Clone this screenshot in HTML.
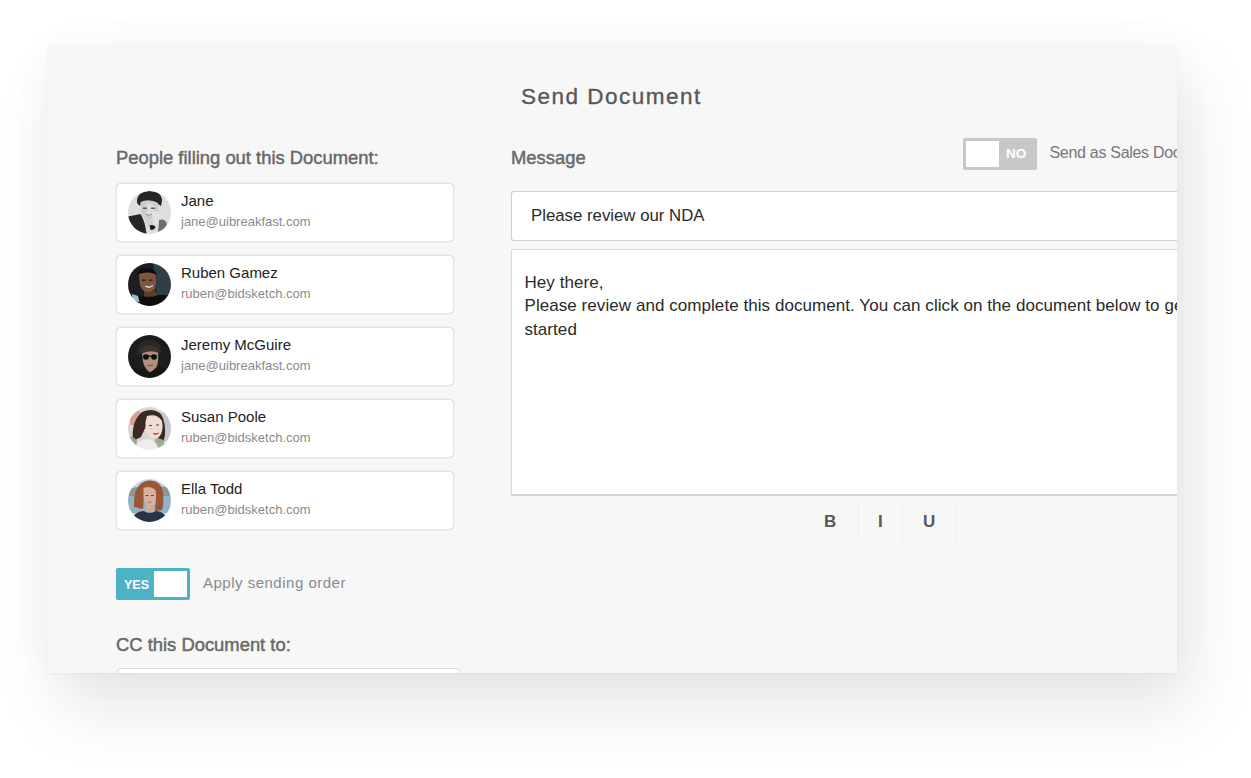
<!DOCTYPE html>
<html><head><meta charset="utf-8">
<style>
*{box-sizing:border-box;margin:0;padding:0}
html,body{width:1251px;height:778px;overflow:hidden;background:#fff;font-family:"Liberation Sans",sans-serif}
.shadow{position:absolute;left:47px;top:45px;width:1130px;height:628px;border-radius:4px;box-shadow:14px 35px 70px rgba(0,0,0,0.10),0 0 45px rgba(0,0,0,0.03),0 1px 3px rgba(0,0,0,0.04)}
.panel{position:absolute;left:47px;top:45px;width:1130px;height:628px;background:#f7f7f7;border-radius:4px;overflow:hidden}
.t{position:absolute;white-space:nowrap;line-height:1}
.title{left:474px;top:40.5px;font-size:22.5px;letter-spacing:1.5px;color:#585858;-webkit-text-stroke:0.35px #585858}
.lbl{font-size:18.4px;color:#686868;-webkit-text-stroke:0.45px #686868}
.card{position:absolute;left:69px;width:338px;height:59px;background:#fff;border:1px solid #e2e2e2;border-radius:5px;box-shadow:0 0 1.5px rgba(0,0,0,0.14)}
.av{position:absolute;left:11px;top:7px;width:43px;height:43px;border-radius:50%;overflow:hidden}
.nm{position:absolute;left:64px;top:9px;font-size:15px;color:#222;line-height:1}
.em{position:absolute;left:64px;top:31px;font-size:13px;color:#8a8a8a;line-height:1}
.tog{position:absolute;width:74px;height:32px;border-radius:2px}
.knob{position:absolute;top:3px;width:33px;height:26px;background:#fff}
.togtxt{position:absolute;top:11px;font-size:12.5px;font-weight:bold;color:#fff;line-height:1}
.input{position:absolute;left:464px;top:146px;width:740px;height:50px;background:#fff;border:1px solid #d0d0d0;border-radius:3px;box-shadow:0 0 1px rgba(0,0,0,0.12)}
.area{position:absolute;left:464px;top:204px;width:740px;height:247px;background:#fff;border:1px solid #d8d8d8;border-bottom:2px solid #d6d6d6;border-radius:2px 2px 0 0;box-shadow:0 0 1px rgba(0,0,0,0.10)}
.msg{font-size:17px;color:#2a2a2a}
.tb{position:absolute;top:457px;height:40px;border-left:1px solid #efefef}
.tbt{position:absolute;font-size:17px;font-weight:bold;color:#5a5a5a;line-height:1;margin-top:-0.5px}
</style></head><body>
<div class="shadow"></div>
<div class="panel">
  <div class="t title">Send Document</div>

  <div class="t lbl" style="left:69px;top:104px">People filling out this Document:</div>

  <div class="card" style="top:138px">
    <div class="av"><svg width="43" height="43" viewBox="0 0 43 43"><defs><filter id="bl" x="-10%" y="-10%" width="120%" height="120%"><feGaussianBlur stdDeviation="0.6"/></filter></defs><g filter="url(#bl)">
<rect width="43" height="43" fill="#dedede"/>
<path d="M9 12 Q8 1 21 0 Q34 0 34 10 L33 15 L30 13 Q22 8 13 12 L12 15 Z" fill="#262626"/>
<path d="M12.5 11 Q21 7 30 12 L30 22 Q29 28 21 29 Q14 27 13 21 Z" fill="#cbcbcb"/>
<path d="M19 12 Q24 12 27 16 L26 25 Q21 26 18 22 Z" fill="#dcdcdc"/>
<path d="M15 16.5 h4 v1.5 h-4z M23 16.5 h4 v1.5 h-4z" fill="#5a5a5a"/>
<path d="M18 23.5 Q21 25 24 23.5" stroke="#8a8a8a" stroke-width="0.9" fill="none"/>
<path d="M0 25.5 L12.5 23 Q17 30 18.5 43 L0 43 Z" fill="#262626"/>
<path d="M16 27 Q21 30 25 28 L25 34 L20 36 Z" fill="#d2d2d2"/>
<path d="M24 21 Q31 19 34 24 Q34 31 30 33 L25 33 Z" fill="#e2e2e2"/>
<path d="M21.5 34.5 Q25 33 27.5 35.5 Q27 39 22.5 39 Z" fill="#1e1e1e"/>
<path d="M31 29 Q37 27 39 33 L36 40 L30 41 Q31 35 31 29 Z" fill="#6e6e6e"/>
</g></svg></div>
    <div class="nm">Jane</div><div class="em">jane@uibreakfast.com</div>
  </div>
  <div class="card" style="top:210px">
    <div class="av"><svg width="43" height="43" viewBox="0 0 43 43"><g filter="url(#bl)">
<rect width="43" height="43" fill="#1a1f21"/>
<path d="M25 0 L43 0 L43 32 L29 32 Z" fill="#2f3f44"/>
<path d="M9 13 Q10 5 19 5 Q27 5 29 12 L27 11 L11 12 Z" fill="#111"/>
<path d="M11 11 Q19 8 27 11 Q29 20 27 26 Q23 30 19 29.5 Q12 27 11.5 19 Z" fill="#7e5440"/>
<path d="M14 16.5 h3.5 v1.2 h-3.5z M21 16.5 h3.5 v1.2 h-3.5z" fill="#2a1a12"/>
<path d="M17 23 Q21 26 25 22.5 Q22 25 17 23z" fill="#e8e0d8" stroke="#e8e0d8" stroke-width="0.8"/>
<path d="M16 28 Q21 31 27 27 L30 33 L16 34 Z" fill="#5e3b2a"/>
<path d="M0 40 Q6 33 15 33 Q22 36 30 32 Q40 31 43 36 L43 43 L0 43 Z" fill="#0f0f0f"/>
<path d="M4 31 L10 33 L11.5 39 L5 38 Z" fill="#9fc0d4"/>
</g></svg></div>
    <div class="nm">Ruben Gamez</div><div class="em">ruben@bidsketch.com</div>
  </div>
  <div class="card" style="top:282px">
    <div class="av"><svg width="43" height="43" viewBox="0 0 43 43"><g filter="url(#bl)">
<rect width="43" height="43" fill="#1c1d1d"/>
<path d="M9 20 Q8 6 21 5 Q34 5 34 18 L31 19 Q22 12 13 19 Z" fill="#2e2824"/>
<path d="M14 17 Q22 13 30 17 Q31 26 28.5 32 Q24 37 21.5 37 Q17 34 15 27 Z" fill="#b08e80"/>
<path d="M12 13 Q20 8 31 13 L31 18 Q22 14 13 19 Z" fill="#3a302b"/>
<circle cx="18" cy="22" r="2.8" fill="#0a0a0a"/><circle cx="26" cy="22" r="2.8" fill="#0a0a0a"/>
<rect x="15" y="20.5" width="14" height="1.2" fill="#0a0a0a"/>
<path d="M19 30 Q22 31.5 25 30" stroke="#6a4a40" stroke-width="0.9" fill="none"/>
<path d="M0 43 L0 33 Q8 34 15 34 Q21 42 28 33 Q38 32 43 34 L43 43Z" fill="#141515"/>
</g></svg></div>
    <div class="nm">Jeremy McGuire</div><div class="em">jane@uibreakfast.com</div>
  </div>
  <div class="card" style="top:354px">
    <div class="av"><svg width="43" height="43" viewBox="0 0 43 43"><g filter="url(#bl)">
<rect width="43" height="43" fill="#d9d6d4"/>
<rect x="2" y="4" width="10" height="14" fill="#d6a292"/>
<rect x="34" y="2" width="9" height="32" fill="#c5c9cd"/>
<path d="M5 34 Q3 14 14 5 Q25 0 33 7 Q38 16 37 28 L35 36 L30 33 L29 16 L20 15 L13 30 Z" fill="#3b2b22"/>
<path d="M19 9 Q29 6 34 14 Q36 24 31 30 Q26 33 21 30 Q17 24 17.5 15 Z" fill="#efdcd3"/>
<path d="M21 18 h3 v1 h-3z M28 17.5 h3 v1 h-3z" fill="#5a3a30"/>
<path d="M20 21 Q22 23 24 21" fill="#e4b8b0"/>
<path d="M25 26.5 Q28 28.5 31 26" fill="#c04848" stroke="#c04848" stroke-width="1"/>
<path d="M0 30 Q5 28 9 34 L7 43 L0 43 Z" fill="#9aa88a"/>
<path d="M27 32 Q32 30 36 34 L35 43 L27 43Z" fill="#a0ad8e"/>
<path d="M7 43 Q9 32 19 32 Q28 32 31 43 Z" fill="#ededed"/>
</g></svg></div>
    <div class="nm">Susan Poole</div><div class="em">ruben@bidsketch.com</div>
  </div>
  <div class="card" style="top:426px">
    <div class="av"><svg width="43" height="43" viewBox="0 0 43 43"><g filter="url(#bl)">
<rect width="43" height="43" fill="#bcdcea"/>
<path d="M0 11 Q8 6 14 9 L30 9 Q37 6 43 10 L43 17 L0 17 Z" fill="#8b978f"/>
<rect x="0" y="17" width="43" height="17" fill="#8fb4c6"/>
<path d="M6 28 Q5 4 20 1.5 Q34 1 35 14 Q36 26 34 31 L27 32 L28 17 L16 17 L15 30 Z" fill="#9b5638"/>
<path d="M15.5 9 Q22 6 27.5 11 Q29 21 26 26.5 Q21.5 29 18 26 Q15 21 15.5 14 Z" fill="#d9b1a0"/>
<path d="M17.5 16 h3 v1 h-3z M23 16 h3 v1 h-3z" fill="#5a4a4a"/>
<path d="M19.5 23 Q21.5 24 23.5 23" stroke="#b07070" stroke-width="1" fill="none"/>
<path d="M18 26 L26 26 L27 33 L17 33 Z" fill="#d2aa9a"/>
<path d="M3 43 Q6 32 16 32 Q21 36 28 32 Q37 32 40 43 Z" fill="#2a3045"/>
</g></svg></div>
    <div class="nm">Ella Todd</div><div class="em">ruben@bidsketch.com</div>
  </div>

  <div class="tog" style="left:69px;top:523px;background:#4cb3c5">
    <div class="togtxt" style="left:8px">YES</div>
    <div class="knob" style="left:38px"></div>
  </div>
  <div class="t" style="left:156px;top:529.5px;font-size:15px;letter-spacing:0.5px;color:#8a8a8a">Apply sending order</div>

  <div class="t lbl" style="left:69px;top:591px">CC this Document to:</div>
  <div style="position:absolute;left:70px;top:623px;width:344px;height:40px;background:#fff;border:1px solid #d8d8d8;border-radius:4px"></div>

  <div class="t lbl" style="left:464px;top:104px">Message</div>

  <div class="tog" style="left:916px;top:93px;background:#c8c8c8">
    <div class="knob" style="left:3px"></div>
    <div class="togtxt" style="left:43px;top:9px;font-size:13.6px">NO</div>
  </div>
  <div class="t" style="left:1002.5px;top:100px;font-size:16px;letter-spacing:-0.3px;color:#777">Send as Sales Document</div>

  <div class="input"><div class="t msg" style="left:19px;top:15.5px;font-size:16.8px">Please review our NDA</div></div>
  <div class="area">
    <div class="t msg" style="left:12.5px;top:20.5px;line-height:23.5px;letter-spacing:0.06px">Hey there,<br>Please review and complete this document. You can click on the document below to get<br>started</div>
  </div>

  <div class="tb" style="left:757px;border-left:none"><div class="tbt" style="left:20px;top:11.5px">B</div></div>
  <div class="tb" style="left:811px;width:44px"><div class="tbt" style="left:19px;top:11.5px">I</div></div>
  <div class="tb" style="left:855px;width:55px;border-right:1px solid #efefef"><div class="tbt" style="left:20px;top:11.5px">U</div></div>
</div>
</body></html>
